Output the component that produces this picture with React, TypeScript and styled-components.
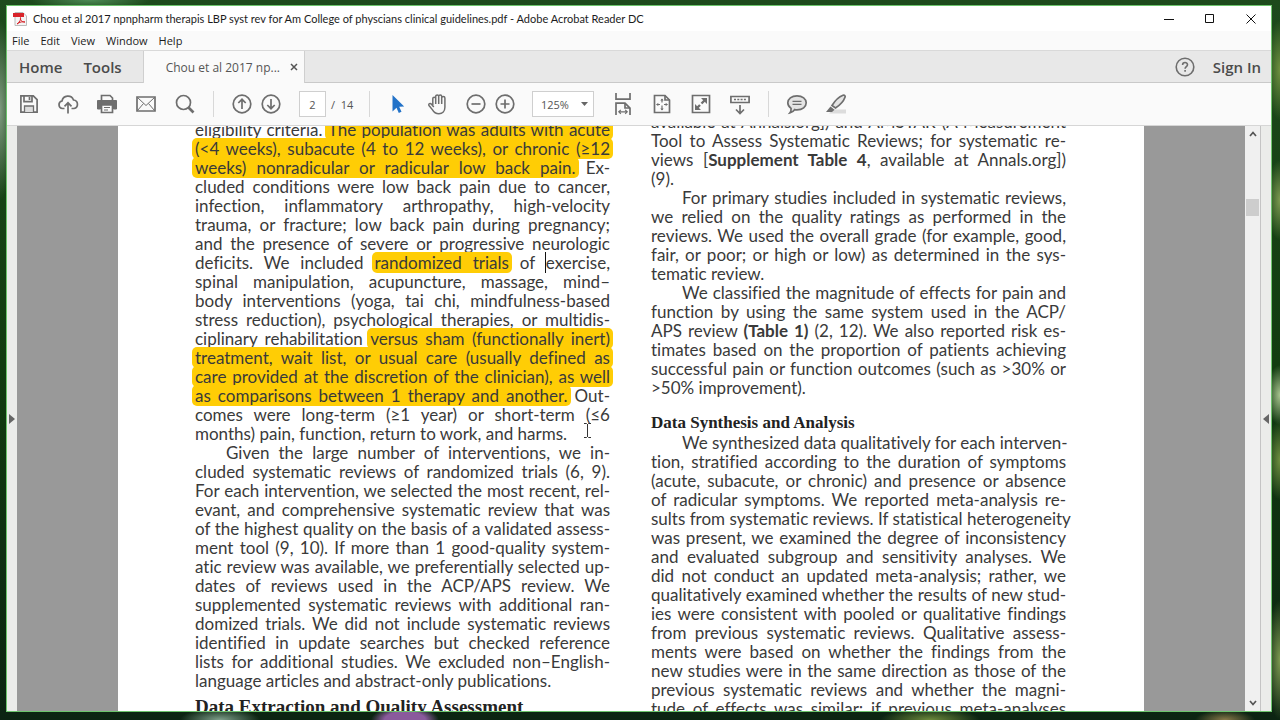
import React from "react";
import styled, { createGlobalStyle, css } from "styled-components";

const GlobalStyle = createGlobalStyle`
  * { box-sizing: border-box; }
  html, body { margin: 0; padding: 0; }
  body { font-family: "Open Sans", "Noto Sans", sans-serif; color: #222; }
  button, input, select { font: inherit; color: inherit; }
`;

const Desktop = styled.div`
  height: 100vh;
  padding: 5px 8px 8px 6px;
  display: flex;
  overflow: hidden;
  background:
    radial-gradient(ellipse 34px 14px at 405px 100%, #8a5a9c 0 60%, transparent),
    radial-gradient(ellipse 40px 12px at 220px 100%, #7fa08c, transparent),
    radial-gradient(ellipse 50px 12px at 930px 100%, #6d8a3c, transparent),
    radial-gradient(ellipse 30px 10px at 1225px 100%, #8a7a4a, transparent),
    radial-gradient(ellipse 60px 10px at 90px 0, #4d8a55, transparent),
    radial-gradient(ellipse 14px 90px at 0 110px, #7f9a80, transparent),
    radial-gradient(ellipse 14px 50px at 100% 70px, #6f9040, transparent),
    radial-gradient(ellipse 14px 40px at 100% 200px, #7d9a50, transparent),
    radial-gradient(ellipse 14px 30px at 100% 395px, #a9c590, transparent),
    radial-gradient(ellipse 14px 40px at 100% 460px, #6f8f40, transparent),
    radial-gradient(ellipse 14px 60px at 100% 660px, #7d9a50, transparent),
    linear-gradient(180deg, #1d4a1c 0%, #123c10 50%, #0c2412 100%);
`;

const Window = styled.div`
  flex: 1;
  min-width: 0;
  display: flex;
  flex-direction: column;
  border: 1px solid #6cc46c;
  background: #fafafa;
`;

const TitleBar = styled.header`
  display: flex;
  align-items: center;
  height: 25px;
  padding-left: 6px;
  background: #fff;
`;

const AppTitle = styled.h1`
  flex: 1;
  margin: 0 0 0 6px;
  font-family: Lato, "Open Sans", sans-serif;
  font-size: 11px;
  font-weight: 400;
  font-variant-ligatures: none;
  line-height: 16px;
  white-space: nowrap;
  color: #1c1c1c;
`;

const WindowButton = styled.button`
  width: 41px;
  height: 25px;
  padding: 0;
  border: 0;
  background: none;
  display: grid;
  place-items: center;
`;

const MenuBar = styled.nav`
  display: flex;
  align-items: center;
  gap: 11px;
  height: 19px;
  padding: 0 5px;
`;

const MenuItem = styled.button`
  padding: 0;
  border: 0;
  background: none;
  font-size: 11px;
  line-height: 16px;
  color: #1c1c1c;
`;

const TabBar = styled.div`
  display: flex;
  align-items: center;
  height: 33px;
  background: #e8e8e8;
  border-top: 1px solid #d9d9d9;
  border-bottom: 1px solid #c9c9c9;
`;

const NavTab = styled.button<{ $gap: number }>`
  padding: 0;
  border: 0;
  background: none;
  margin-left: ${(p) => p.$gap}px;
  font-size: 15px;
  font-weight: 600;
  line-height: 20px;
  color: #4b4b4b;
`;

const FileTab = styled.div`
  display: flex;
  align-items: center;
  justify-content: space-between;
  align-self: stretch;
  width: 162px;
  margin: 0 auto -1px 21px;
  padding: 0 6px 0 22px;
  background: #fafafa;
  border: solid #cfcfcf;
  border-width: 0 1px;
  font-size: 12px;
  color: #555;
`;

const PlainButton = styled.button`
  padding: 0;
  border: 0;
  background: none;
  display: grid;
  place-items: center;
`;

const SignIn = styled.button`
  padding: 0;
  border: 0;
  background: none;
  margin: 0 10px 0 18px;
  font-size: 15px;
  font-weight: 600;
  line-height: 20px;
  color: #4b4b4b;
`;

const Toolbar = styled.div`
  display: flex;
  align-items: center;
  flex: none;
  height: 43px;
  padding-left: 2px;
  border-bottom: 1px solid #d6d6d6;
`;

const ToolButton = styled.button<{ $narrow?: boolean }>`
  width: ${(p) => (p.$narrow ? 29 : 39)}px;
  height: 32px;
  padding: 0;
  border: 0;
  background: none;
  display: grid;
  place-items: center;
`;

const Pair = styled.div`
  display: flex;
  margin: 0 5px;
`;

const Divider = styled.span`
  width: 1px;
  height: 26px;
  margin: 0 8px 0 9px;
  background: #d8d8d8;
`;

const PageInput = styled.input`
  width: 27px;
  height: 26px;
  margin-left: 9px;
  padding: 0;
  border: 1px solid #cfcfcf;
  background: #fff;
  text-align: center;
  font-size: 11px;
  color: #555;
`;

const PageTotal = styled.span`
  width: 34px;
  padding-left: 5px;
  font-size: 11px;
  white-space: pre;
  color: #555;
`;

const ZoomBox = styled.div`
  display: grid;
  align-items: center;
  margin: 0 9px 0 8px;
  > * { grid-area: 1 / 1; }
  > svg { justify-self: end; margin-right: 6px; pointer-events: none; }
`;

const ZoomSelect = styled.select`
  appearance: none;
  width: 62px;
  height: 26px;
  padding: 0 0 0 8px;
  border: 1px solid #cfcfcf;
  border-radius: 0;
  background: #fff;
  font-size: 11px;
  color: #555;
`;

const Workspace = styled.main`
  flex: 1;
  min-height: 0;
  display: flex;
  background: #999;
`;

const SideRail = styled.button`
  width: 10px;
  padding: 0;
  border: 0;
  background: #ebecea;
  display: grid;
  place-items: center;
`;

const Viewport = styled.div`
  flex: 1;
  min-width: 0;
  display: flex;
  justify-content: center;
  padding: 0 101px;
  overflow: hidden;
`;

const Sheet = styled.article`
  position: relative;
  flex: 1;
  display: grid;
  grid-template-columns: 1fr 1fr;
  gap: 41px;
  padding: 0 78px 0 77px;
  background: #fff;
  color: #3a3a3a;
  font-family: Lato, "Liberation Sans", sans-serif;
  font-size: 17px;
  font-variant-ligatures: none;
  line-height: 19px;
`;

const Column = styled.section<{ $scrolled: number }>`
  margin-top: -${(p) => p.$scrolled}px;
  min-width: 0;
`;

const Line = styled.div<{ $indent?: boolean; $end?: boolean }>`
  height: 19px;
  white-space: nowrap;
  text-align: justify;
  ${(p) => !p.$end && css`text-align-last: justify;`}
  ${(p) => p.$indent && css`padding-left: 31px;`}
`;

const Heading = styled.h2<{ $large?: boolean }>`
  margin: ${(p) => (p.$large ? 7 : 16)}px 0 0;
  font-family: "Liberation Serif", serif;
  font-size: ${(p) => (p.$large ? 19 : 17)}px;
  font-weight: 700;
  line-height: 20px;
  white-space: nowrap;
  color: #222;
`;

const Mark = styled.mark`
  padding: 0 3px;
  margin: 0 -3px;
  border-radius: 5px;
  background: #ffcd05;
  color: inherit;
`;

const Caret = styled.span`
  border-left: 1px solid #111;
  margin-left: -1px;
`;

const Pointer = styled.svg`
  position: absolute;
  left: 465px;
  top: 296px;
`;

const Scrollbar = styled.div`
  display: flex;
  flex-direction: column;
  align-items: center;
  justify-content: space-between;
  width: 16px;
  padding: 4px 0;
  background: #f0f0f0;
  border-right: 1px solid #c4c4c4;
`;

const ScrollTrack = styled.div`
  flex: 1;
  width: 13px;
  padding-top: 61px;
`;

const ScrollThumb = styled.div`
  height: 17px;
  background: #cdcdcd;
`;

const Icon = ({ children, size = 22 }: { children: React.ReactNode; size?: number }) => (
  <svg width={size} height={size} viewBox="0 0 22 22" fill="none" stroke="#6e6e6e" strokeWidth="1.7" aria-hidden="true">
    {children}
  </svg>
);

const fileTools: [string, React.ReactNode][] = [
  ["Save", <><path d="M2.9 2.9h12.4l3.8 3.8v12.4H2.9z" /><path d="M6 3v5.600h8V3M11.500 4v3" /><path d="M6.500 19v-6h9v6" fill="#ddd" strokeWidth="1.300" /></>],
  ["Upload", <><path d="M7.500 15.500H5.500a3.800 3.800 0 0 1-.5-7.500 6 6 0 0 1 11.500-1 4.300 4.300 0 0 1 .5 8.500h-2.500" /><path d="M11 20.500V10M7.500 13.300 11 9.800l3.500 3.500" /></>],
  ["Print", <><path d="M5.500 8V2.500h8.500l2.500 2.500V8" /><path d="M1.500 7.500h19v8.500h-3v-4h-13v4h-3z" fill="#6e6e6e" strokeWidth="1" /><path d="M5.500 12h11v7.500h-11z" fill="#fafafa" /><path d="M8 14.500h6M8 17h4" strokeWidth="1" /></>],
  ["Email", <><path d="M2 4h18v14H2z" /><path d="m2.500 4.500 8.500 8 8.500-8M2.500 17.500l6-7M19.500 17.500l-6-7" strokeWidth="1" /></>],
  ["Find", <><circle cx="9.500" cy="9.500" r="7" /><path d="m14.500 14.500 5 5" strokeWidth="2.600" /></>],
];

const viewTools: [string, React.ReactNode][] = [
  ["Fit width", <><path d="M4 0v6.200h14V0" /><path d="M4 22V10.200h9l5 5V22" /><path d="M13 10.500v4.500h5" /><path d="M7 18.800h8M8.800 16.800l-2 2 2 2M13.200 16.800l2 2-2 2" strokeWidth="1.200" /></>],
  ["Fit page", <><path d="M3.500 2.500h10.500l4.500 4.500v12.500h-15z" /><path d="M14 2.500V7h4.500" /><path d="M11 6v3.500M11 12.500V17M5.500 11.500H9M13 11.500h3.500" strokeWidth="1.200" /><path d="m9.300 7.500 1.700-2 1.700 2zM9.300 15.500l1.700 2 1.700-2zM7.300 9.800l-2 1.700 2 1.700zM14.700 9.800l2 1.700-2 1.700z" fill="#6e6e6e" stroke="none" /></>],
  ["Full screen", <><path d="M2.500 2.500h17v17h-17z" /><path d="M11.500 10.500 15 7M10 12l-3 3" strokeWidth="2.400" /><path d="M11 5h6v6zM5 11v6h6z" fill="#6e6e6e" stroke="none" /></>],
  ["Read mode", <><path d="M1.900 3.500h18.200v6H1.900z" /><path d="M5 6.500h12" strokeDasharray="2 1.300" /><path d="M11 12v8M7 16.500l4 4 4-4" /></>],
];

const FileIcon = () => (
  <svg width="14" height="14" viewBox="0 0 14 14" aria-hidden="true">
    <path d="M2 .5h8L13.500 4v9.500H2z" fill="#f4f4f4" stroke="#bbb" />
    <path d="M0 1h11v4H0z" fill="#d8242a" />
    <path d="M4 12c3-2 4-5 3.500-6.500C7 8 9 10.500 12 10c-2-.8-5.500 0-8 2z" fill="none" stroke="#d8242a" />
  </svg>
);

export default function App() {
  return (
    <Desktop>
      <GlobalStyle />
      <Window>
        <TitleBar>
          <FileIcon />
          <AppTitle>
            Chou et al 2017 npnpharm therapis LBP syst rev for Am College of physcians clinical guidelines.pdf - Adobe Acrobat Reader DC
          </AppTitle>
          <WindowButton aria-label="Minimize"><svg width="10" height="10"><path d="M0 5.500h10" stroke="#111" /></svg></WindowButton>
          <WindowButton aria-label="Maximize"><svg width="10" height="10"><path d="M.5.5h8v8h-8z" fill="none" stroke="#111" /></svg></WindowButton>
          <WindowButton aria-label="Close"><svg width="10" height="10"><path d="m.5.5 9 9m0-9-9 9" stroke="#111" /></svg></WindowButton>
        </TitleBar>
        <MenuBar>
          {["File", "Edit", "View", "Window", "Help"].map((m) => <MenuItem key={m}>{m}</MenuItem>)}
        </MenuBar>
        <TabBar>
          <NavTab $gap={12}>Home</NavTab>
          <NavTab $gap={21}>Tools</NavTab>
          <FileTab>
            <span>Chou et al 2017 np...</span>
            <PlainButton aria-label="Close tab"><svg width="8" height="8"><path d="m1 1 6 6m0-6-6 6" stroke="#555" strokeWidth="1.500" /></svg></PlainButton>
          </FileTab>
          <PlainButton aria-label="Help">
            <svg width="20" height="20" viewBox="0 0 20 20" fill="none" stroke="#6e6e6e" strokeWidth="1.600">
              <circle cx="10" cy="10" r="8.800" />
              <path d="M7.600 8c0-3.300 4.900-3.200 4.900-.3 0 1.800-2.400 1.900-2.400 4M10.100 13v1.800" />
            </svg>
          </PlainButton>
          <SignIn>Sign In</SignIn>
        </TabBar>
        <Toolbar>
          {fileTools.map(([name, art]) => <ToolButton key={name} aria-label={name}><Icon>{art}</Icon></ToolButton>)}
          <Divider />
          <Pair>
            <ToolButton $narrow aria-label="Previous page"><Icon><circle cx="11" cy="11" r="8.800" /><path d="M11 16V6.500M7.300 10 11 6.300l3.700 3.700" /></Icon></ToolButton>
            <ToolButton $narrow aria-label="Next page"><Icon><circle cx="11" cy="11" r="8.800" /><path d="M11 6v9.500M7.300 12l3.700 3.700 3.700-3.700" /></Icon></ToolButton>
          </Pair>
          <PageInput aria-label="Page number" defaultValue="2" />
          <PageTotal>/  14</PageTotal>
          <Divider />
          <ToolButton aria-label="Select"><Icon><path d="M5.500 2v16.500l4-3.700 2.300 5.200 2.700-1.200-2.300-5 5-.3z" fill="#2272c8" stroke="none" /></Icon></ToolButton>
          <ToolButton aria-label="Pan">
            <Icon><path d="M5.800 13.500V5.600c0-1.800 2.900-1.800 2.900 0V11M8.700 10V3.300c0-1.900 3-1.900 3 0V11M11.700 10V3.300c0-1.900 3-1.900 3 0V11M14.700 10V5c0-1.900 3.200-1.900 3.200 0v9.300c0 4-2.500 6.400-6 6.400-3.200 0-5-1.200-6.400-3.800L2 12.500c-1-1.700 1.300-2.800 2.500-1.300l2.300 2.700" transform="translate(1 0)" strokeWidth="1.500" /></Icon>
          </ToolButton>
          <Pair>
            <ToolButton $narrow aria-label="Zoom out"><Icon><circle cx="11" cy="11" r="8.800" /><path d="M6.500 11h9" /></Icon></ToolButton>
            <ToolButton $narrow aria-label="Zoom in"><Icon><circle cx="11" cy="11" r="8.800" /><path d="M6.500 11h9M11 6.500v9" /></Icon></ToolButton>
          </Pair>
          <ZoomBox>
            <ZoomSelect aria-label="Zoom level" defaultValue="125%"><option>125%</option></ZoomSelect>
            <svg width="7" height="4"><path d="M0 0h7L3.500 4z" fill="#666" /></svg>
          </ZoomBox>
          {viewTools.map(([name, art]) => <ToolButton key={name} aria-label={name}><Icon>{art}</Icon></ToolButton>)}
          <Divider />
          <ToolButton aria-label="Comment"><Icon><path d="M11 2.800c5.500 0 9.200 3 9.200 7s-3.700 7-9.200 7c-.8 0-1.500 0-2.200-.2C7.500 18.500 6 19.500 3.800 20c1-1.300 1.500-2.800 1.300-4.600C3 14 1.800 12 1.800 9.800c0-4 3.700-7 9.200-7z" fill="#e4e4e4" /><path d="M6.500 8.300h9M6.500 11.300h9" strokeWidth="1.200" /></Icon></ToolButton>
          <ToolButton aria-label="Highlight"><Icon><path d="M8 16.500h13v4H4z" fill="#dcdcdc" stroke="none" /><path d="M7 12.500C9.500 8.500 13.500 4 18 2.300c1.500-.5 2.600.6 2 2C18.500 8.500 14.500 12.500 10.500 15z" fill="#e4e4e4" /><path d="m5.500 13.500 4 3.200-2.500 2.300H1z" fill="#6e6e6e" stroke="none" /></Icon></ToolButton>
        </Toolbar>
        <Workspace>
          <SideRail aria-label="Open navigation pane"><svg width="6" height="10"><path d="M0 0v10l6-5z" fill="#666" /></svg></SideRail>
          <Viewport>
            <Sheet>
              <Column $scrolled={6}>
                <Line>eligibility criteria. <Mark>The population was adults with acute</Mark></Line>
                <Line><Mark>(&lt;4 weeks), subacute (4 to 12 weeks), or chronic (≥12</Mark></Line>
                <Line><Mark>weeks) nonradicular or radicular low back pain.</Mark> Ex-</Line>
                <Line>cluded conditions were low back pain due to cancer,</Line>
                <Line>infection, inflammatory arthropathy, high-velocity</Line>
                <Line>trauma, or fracture; low back pain during pregnancy;</Line>
                <Line>and the presence of severe or progressive neurologic</Line>
                <Line>deficits. We included <Mark>randomized trials</Mark> of <Caret />exercise,</Line>
                <Line>spinal manipulation, acupuncture, massage, mind–</Line>
                <Line>body interventions (yoga, tai chi, mindfulness-based</Line>
                <Line>stress reduction), psychological therapies, or multidis-</Line>
                <Line>ciplinary rehabilitation <Mark>versus sham (functionally inert)</Mark></Line>
                <Line><Mark>treatment, wait list, or usual care (usually defined as</Mark></Line>
                <Line><Mark>care provided at the discretion of the clinician), as well</Mark></Line>
                <Line><Mark>as comparisons between 1 therapy and another.</Mark> Out-</Line>
                <Line>comes were long-term (≥1 year) or short-term (≤6</Line>
                <Line $end>months) pain, function, return to work, and harms.</Line>
                <Line $indent>Given the large number of interventions, we in-</Line>
                <Line>cluded systematic reviews of randomized trials (6, 9).</Line>
                <Line>For each intervention, we selected the most recent, rel-</Line>
                <Line>evant, and comprehensive systematic review that was</Line>
                <Line>of the highest quality on the basis of a validated assess-</Line>
                <Line>ment tool (9, 10). If more than 1 good-quality system-</Line>
                <Line>atic review was available, we preferentially selected up-</Line>
                <Line>dates of reviews used in the ACP/APS review. We</Line>
                <Line>supplemented systematic reviews with additional ran-</Line>
                <Line>domized trials. We did not include systematic reviews</Line>
                <Line>identified in update searches but checked reference</Line>
                <Line>lists for additional studies. We excluded non–English-</Line>
                <Line $end>language articles and abstract-only publications.</Line>
                <Heading $large>Data Extraction and Quality Assessment</Heading>
              </Column>
              <Column $scrolled={14}>
                <Line>available at Annals.org]) and AMSTAR (A Measurement</Line>
                <Line>Tool to Assess Systematic Reviews; for systematic re-</Line>
                <Line>views [<b>Supplement Table 4</b>, available at Annals.org])</Line>
                <Line $end>(9).</Line>
                <Line $indent>For primary studies included in systematic reviews,</Line>
                <Line>we relied on the quality ratings as performed in the</Line>
                <Line>reviews. We used the overall grade (for example, good,</Line>
                <Line>fair, or poor; or high or low) as determined in the sys-</Line>
                <Line $end>tematic review.</Line>
                <Line $indent>We classified the magnitude of effects for pain and</Line>
                <Line>function by using the same system used in the ACP/</Line>
                <Line>APS review <b>(Table 1)</b> (2, 12). We also reported risk es-</Line>
                <Line>timates based on the proportion of patients achieving</Line>
                <Line>successful pain or function outcomes (such as &gt;30% or</Line>
                <Line $end>&gt;50% improvement).</Line>
                <Heading>Data Synthesis and Analysis</Heading>
                <Line $indent>We synthesized data qualitatively for each interven-</Line>
                <Line>tion, stratified according to the duration of symptoms</Line>
                <Line>(acute, subacute, or chronic) and presence or absence</Line>
                <Line>of radicular symptoms. We reported meta-analysis re-</Line>
                <Line>sults from systematic reviews. If statistical heterogeneity</Line>
                <Line>was present, we examined the degree of inconsistency</Line>
                <Line>and evaluated subgroup and sensitivity analyses. We</Line>
                <Line>did not conduct an updated meta-analysis; rather, we</Line>
                <Line>qualitatively examined whether the results of new stud-</Line>
                <Line>ies were consistent with pooled or qualitative findings</Line>
                <Line>from previous systematic reviews. Qualitative assess-</Line>
                <Line>ments were based on whether the findings from the</Line>
                <Line>new studies were in the same direction as those of the</Line>
                <Line>previous systematic reviews and whether the magni-</Line>
                <Line>tude of effects was similar; if previous meta-analyses</Line>
              </Column>
              <Pointer width="9" height="17" viewBox="0 0 9 17" fill="none" stroke="#333" aria-hidden="true">
                <path d="M1 1.500h2.500l1 1 1-1H8M4.500 2v13M1 15.500h2.500l1-1 1 1H8" />
              </Pointer>
            </Sheet>
          </Viewport>
          <Scrollbar>
            <svg width="8" height="8"><path d="m1 6 3-3.500L7 6" fill="none" stroke="#555" strokeWidth="1.700" /></svg>
            <ScrollTrack><ScrollThumb /></ScrollTrack>
            <svg width="8" height="8"><path d="m1 2 3 3.500L7 2" fill="none" stroke="#555" strokeWidth="1.700" /></svg>
          </Scrollbar>
          <SideRail aria-label="Open tools pane"><svg width="6" height="10"><path d="M6 0v10L0 5z" fill="#666" /></svg></SideRail>
        </Workspace>
      </Window>
    </Desktop>
  );
}
